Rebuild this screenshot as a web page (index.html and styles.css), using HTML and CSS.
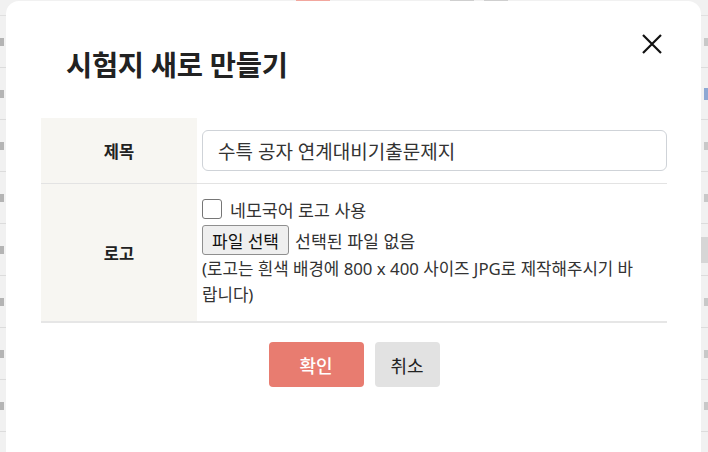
FILE: index.html
```html
<!DOCTYPE html>
<html lang="ko">
<head>
<meta charset="utf-8">
<title>시험지 새로 만들기</title>
<link rel="stylesheet" href="styles.css">
</head>
<body>
<div class="page">
  <div class="topbar">
    <span class="tb-accent"></span>
    <span class="tb-grey tb-g1"></span>
    <span class="tb-grey tb-g2"></span>
  </div>
  <div class="bg-row"><span class="frag"></span><span class="frag-r"></span></div>
  <div class="bg-row"><span class="frag"></span><span class="frag-r blue"></span></div>
  <div class="bg-row"><span class="frag"></span><span class="frag-r"></span></div>
  <div class="bg-row"><span class="frag"></span><span class="frag-r"></span></div>
  <div class="bg-row"><span class="frag"></span><span class="frag-r grey"></span></div>
  <div class="bg-row"><span class="frag"></span><span class="frag-r"></span></div>
  <div class="bg-row"><span class="frag"></span><span class="frag-r"></span></div>
  <div class="bg-row"><span class="frag"></span><span class="frag-r"></span></div>
</div>

<div class="modal">
  <div class="modal-head">
    <h1 class="title">시험지 새로 만들기</h1>
    <button class="close" aria-label="닫기">
      <svg width="22" height="22" viewBox="0 0 22 22"><path d="M2 2L20 20M20 2L2 20" stroke="#111" stroke-width="2.2" fill="none"/></svg>
    </button>
  </div>
  <div class="form">
    <div class="row row-title">
      <div class="label">제목</div>
      <div class="cell">
        <div class="input">수특 공자 연계대비기출문제지</div>
      </div>
    </div>
    <div class="row row-logo">
      <div class="label">로고</div>
      <div class="cell cell-logo">
        <label class="check-line"><span class="checkbox"></span>네모국어 로고 사용</label>
        <div class="file-line"><span class="file-btn">파일 선택</span><span class="file-none">선택된 파일 없음</span></div>
        <p class="note">(로고는 흰색 배경에 800 x 400 사이즈 JPG로 제작해주시기 바랍니다)</p>
      </div>
    </div>
  </div>
  <div class="actions">
    <button class="btn btn-ok">확인</button>
    <button class="btn btn-cancel">취소</button>
  </div>
</div>
</body>
</html>
```

FILE: styles.css
```css
* { box-sizing: border-box; }
html, body {
  margin: 0;
  padding: 0;
  width: 708px;
  height: 452px;
  overflow: hidden;
  background: #f1f1f1;
  font-family: "Noto Sans", "Noto Sans CJK KR", sans-serif;
  color: #333;
}
.page {
  display: flex;
  flex-direction: column;
}
.topbar {
  height: 16px;
  display: flex;
  border-bottom: 1px solid #e0e0e0;
}
.tb-accent { margin-left: 296px; width: 34px; height: 1px; background: #f2a79e; }
.tb-grey { width: 24px; height: 1px; background: #cfcfcf; }
.tb-g1 { margin-left: 120px; }
.tb-g2 { margin-left: 10px; }
.bg-row {
  height: 52px;
  border-bottom: 1px solid #dcdcdc;
  display: flex;
  justify-content: space-between;
  align-items: center;
}
.bg-row:first-of-type { height: 26px; }
.frag { width: 4px; height: 8px; background: #b4b4b4; }
.frag-r { width: 4px; height: 8px; background: #c8c8c8; }
.frag-r.blue { background: #8ea8d3; height: 12px; }
.frag-r.grey { background: #d6d6d6; height: 26px; width: 7px; }

.modal {
  position: absolute;
  left: 6px;
  top: 1px;
  width: 695px;
  height: 470px;
  background: #fff;
  border-radius: 13px;
  padding: 0 34px 0 35px;
}
.modal-head {
  display: flex;
  justify-content: space-between;
  align-items: flex-start;
  padding: 32px 0 0 25px;
  height: 117px;
}
.title {
  margin: 13px 0 0;
  font-size: 28.5px;
  font-weight: 700;
  color: #222;
  letter-spacing: -0.3px;
  line-height: 38px;
}
.close {
  border: 0;
  background: none;
  padding: 0;
  margin: 0 4px 0 0;
  width: 22px;
  height: 22px;
  cursor: pointer;
}
.close svg { display: block; }

.form {
  border-bottom: 2px solid #e6e6e6;
}
.row {
  display: flex;
}
.row-title {
  height: 66px;
  border-bottom: 1px solid #e3e3e3;
}
.row-logo {
  height: 137px;
}
.label {
  width: 156px;
  flex: none;
  background: #f7f6f2;
  display: flex;
  align-items: center;
  justify-content: center;
  font-size: 16.5px;
  font-weight: 700;
  color: #222;
}
.cell {
  flex: 1;
  padding: 0 0 0 5px;
  display: flex;
  align-items: center;
}
.input {
  width: 100%;
  height: 41px;
  border: 1px solid #cfd3d8;
  border-radius: 6px;
  padding: 0 15px;
  display: flex;
  align-items: center;
  font-size: 19px;
  color: #333;
}
.cell-logo {
  flex-direction: column;
  align-items: flex-start;
  padding-top: 13px;
  font-size: 17.3px;
  color: #333;
}
.check-line {
  display: flex;
  align-items: center;
  height: 24px;
  gap: 8px;
}
.checkbox {
  width: 20px;
  height: 20px;
  border: 1px solid #767676;
  border-radius: 3px;
  background: #fff;
}
.file-line {
  display: flex;
  align-items: center;
  gap: 6px;
  margin-top: 4px;
}
.file-btn {
  height: 30px;
  padding: 0 9px;
  border: 1px solid #8f8f8f;
  border-radius: 3px;
  background: #efefef;
  display: flex;
  align-items: center;
  font-size: 17px;
  color: #111;
}
.note {
  margin: 1px 0 0;
  line-height: 26px;
  width: 445px;
  font-size: 16.8px;
  word-break: break-all;
}

.actions {
  display: flex;
  justify-content: center;
  gap: 11px;
  padding-top: 19px;
}
.btn {
  height: 45px;
  border: 0;
  border-radius: 4px;
  font-family: inherit;
  font-size: 18px;
  cursor: pointer;
}
.btn-ok {
  width: 95px;
  background: #e87c70;
  color: #fff;
  font-weight: 500;
}
.btn-cancel {
  width: 65px;
  background: #e2e2e2;
  color: #222;
}
```
